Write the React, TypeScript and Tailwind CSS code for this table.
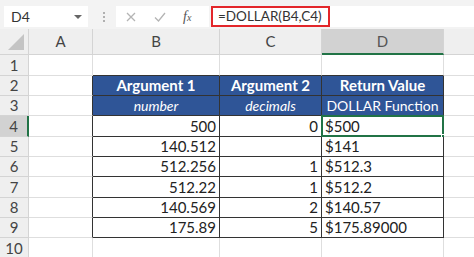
import React from 'react';

type Col = 'A' | 'B' | 'C' | 'D' | 'E';

const COLS: Col[] = ['A', 'B', 'C', 'D', 'E'];
const ROW_HEIGHTS = [21, 20, 20, 21, 20, 20, 21, 20, 20, 21];

// table body: B4:D9
const DATA: [string, string, string][] = [
  ['500', '0', '$500'],
  ['140.512', '', '$141'],
  ['512.256', '1', '$512.3'],
  ['512.22', '1', '$512.2'],
  ['140.569', '2', '$140.57'],
  ['175.89', '5', '$175.89000'],
];

const inTable = (r: number, c: number) => r >= 2 && r <= 9 && c >= 1 && c <= 3;

const FormulaBar: React.FC = () => (
  <div className="flex h-[29px] items-start bg-[#f3f3f3] pt-[6px]">
    <div className="relative ml-[4px] flex h-[21px] w-[84px] items-center bg-white pl-[7px] text-[14px] text-[#333]">
      D4
      <span className="absolute right-[6px] top-[9px] h-0 w-0 border-x-[4px] border-t-[4px] border-x-transparent border-t-[#666]" />
    </div>
    <div className="ml-[15px] mt-[6px] flex flex-col gap-[2px]">
      <span className="h-[2px] w-[2px] bg-[#b0b0b0]" />
      <span className="h-[2px] w-[2px] bg-[#b0b0b0]" />
      <span className="h-[2px] w-[2px] bg-[#b0b0b0]" />
    </div>
    <div className="ml-[11px] flex h-[21px] w-[93px] items-center bg-white">
      <svg width="10" height="10" viewBox="0 0 10 10" className="ml-[10px]">
        <path d="M1 1L9 9M9 1L1 9" stroke="#b4b4b4" strokeWidth="1.3" fill="none" />
      </svg>
      <svg width="12" height="10" viewBox="0 0 12 10" className="ml-[18px]">
        <path d="M1 5.5L4.5 9L11 1" stroke="#b4b4b4" strokeWidth="1.3" fill="none" />
      </svg>
      <span className="ml-[17px] font-['Liberation_Serif',serif] text-[14px] italic text-[#555]">
        f<span className="text-[10px]">x</span>
      </span>
    </div>
    <div className="ml-[2px] flex h-[21px] flex-1 bg-white">
      <div className="flex h-[21px] w-[119px] items-center border-2 border-[#e3262a] pl-[5px] text-[13.5px] text-[#333]">
        =DOLLAR(B4,C4)
      </div>
    </div>
  </div>
);

const App: React.FC = () => {
  return (
    <div className="h-[257px] w-[474px] overflow-hidden bg-white font-['Lato','Liberation_Sans',sans-serif] text-[#222]">
      <FormulaBar />

      <div className="grid w-[508px] grid-cols-[29px_64px_127px_102px_122px_64px]">
        {/* column header strip; E sits past the window edge, so its letter is not shown */}
        <div className="relative h-[26px] border-b border-r border-[#d4d4d4] bg-[#efefef]">
          <span className="absolute bottom-[4px] right-[4px] h-0 w-0 border-b-[16px] border-l-[16px] border-b-[#c4c4c4] border-l-transparent" />
        </div>
        {COLS.map((c) => (
          <div
            key={c}
            className={
              c === 'D'
                ? 'flex h-[26px] items-center justify-center border-b-2 border-r border-b-[#217346] border-r-[#d4d4d4] bg-[#d2d2d2] text-[15px] text-[#555]'
                : 'flex h-[26px] items-center justify-center border-b border-r border-[#d4d4d4] bg-[#efefef] text-[15px] text-[#444]'
            }
          >
            {c === 'E' ? null : c}
          </div>
        ))}

        {ROW_HEIGHTS.map((h, i) => {
          const r = i + 1;
          return (
            <React.Fragment key={r}>
              <div
                style={{ height: h }}
                className={
                  r === 4
                    ? 'flex items-center justify-center border-b border-r-2 border-b-[#d4d4d4] border-r-[#217346] bg-[#d2d2d2] text-[15px] text-[#444]'
                    : 'flex items-center justify-center border-b border-r border-[#d4d4d4] bg-[#efefef] text-[15px] text-[#444]'
                }
              >
                {r}
              </div>
              {COLS.map((_, ci) => {
                const c = ci;
                const darkRight = r >= 2 && r <= 9 && (inTable(r, c) || c === 0);
                const darkBottom = c >= 1 && c <= 3 && (inTable(r, c) || r === 1);
                const blue = inTable(r, c) && r <= 3;
                let content: React.ReactNode = null;
                let align = 'justify-end pr-[4px]';

                if (r === 2 && c >= 1 && c <= 3) {
                  content = ['Argument 1', 'Argument 2', 'Return Value'][c - 1];
                  align = 'justify-center font-bold text-[15px]';
                } else if (r === 3 && c >= 1 && c <= 3) {
                  content = ['number', 'decimals', 'DOLLAR Function'][c - 1];
                  align = c === 3 ? 'justify-center text-[14px]' : 'justify-center italic text-[14px]';
                } else if (r >= 4 && r <= 9 && c >= 1 && c <= 3) {
                  content = DATA[r - 4][c - 1];
                  align = c === 3 ? 'justify-start pl-[3px] text-[15px]' : 'justify-end pr-[3px] text-[15px]';
                }

                return (
                  <div
                    key={c}
                    style={{ height: h }}
                    className={[
                      'relative flex items-center whitespace-nowrap border-b border-r',
                      darkRight ? 'border-r-[#333]' : 'border-r-[#dedede]',
                      darkBottom ? 'border-b-[#333]' : 'border-b-[#dedede]',
                      blue ? 'bg-[#2f5597] text-white' : 'bg-white text-[#222]',
                      align,
                    ].join(' ')}
                  >
                    {content}
                    {r === 4 && c === 3 && (
                      <>
                        <span className="pointer-events-none absolute inset-x-[-1px] bottom-[-1px] top-[-1px] border-2 border-[#217346]" />
                        <span className="absolute bottom-[-3px] right-[-3px] h-[5px] w-[5px] border border-white bg-[#217346]" />
                      </>
                    )}
                  </div>
                );
              })}
            </React.Fragment>
          );
        })}
      </div>
    </div>
  );
};

export default App;
